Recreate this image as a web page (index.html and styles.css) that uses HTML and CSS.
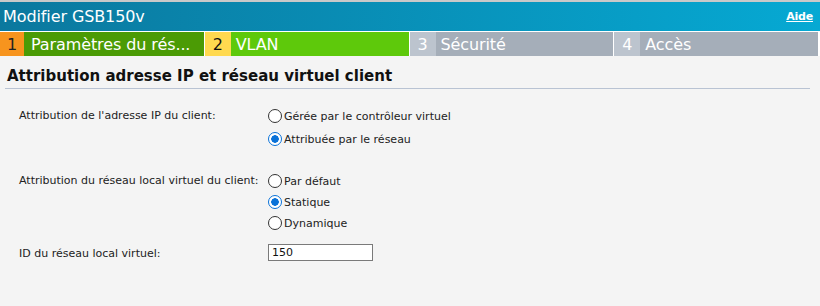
FILE: index.html
```html
<!DOCTYPE html>
<html lang="fr">
<head>
    <meta charset="UTF-8">
    <title>Modifier GSB150v</title>
    <link rel="stylesheet" href="styles.css">
</head>
<body>
    <div class="top-strip"></div>
    <div class="header">
        <span class="title">Modifier GSB150v</span>
        <a class="help" href="#">Aide</a>
    </div>

    <div class="steps">
        <div class="step done">
            <span class="num">1</span>
            <span class="label">Paramètres du rés...</span>
        </div>
        <div class="step current">
            <span class="num">2</span>
            <span class="label">VLAN</span>
        </div>
        <div class="step todo">
            <span class="num">3</span>
            <span class="label">Sécurité</span>
        </div>
        <div class="step todo">
            <span class="num">4</span>
            <span class="label">Accès</span>
        </div>
    </div>

    <div class="content">
        <h2 class="section-title">Attribution adresse IP et réseau virtuel client</h2>

        <div class="form-row">
            <div class="form-label">Attribution de l'adresse IP du client:</div>
            <div class="options">
                <label class="radio"><input type="radio" name="ip"> Gérée par le contrôleur virtuel</label>
                <label class="radio"><input type="radio" name="ip" checked> Attribuée par le réseau</label>
            </div>
        </div>

        <div class="form-row vlan-row">
            <div class="form-label">Attribution du réseau local virtuel du client:</div>
            <div class="options tight">
                <label class="radio"><input type="radio" name="vlan"> Par défaut</label>
                <label class="radio"><input type="radio" name="vlan" checked> Statique</label>
                <label class="radio"><input type="radio" name="vlan"> Dynamique</label>
            </div>
        </div>

        <div class="form-row id-row">
            <div class="form-label">ID du réseau local virtuel:</div>
            <div class="options">
                <input class="text-field" type="text" value="150">
            </div>
        </div>
    </div>
</body>
</html>
```

FILE: styles.css
```css
body {
    margin: 0;
    background-color: #f4f4f4;
    font-family: "DejaVu Sans", Verdana, sans-serif;
    font-size: 11px;
    color: #222;
}
.top-strip {
    height: 2px;
    background-color: #c9c9c9;
}
.header {
    height: 29px;
    display: flex;
    align-items: center;
    justify-content: space-between;
    padding: 0 7px 0 3px;
    background: linear-gradient(to right, #0b789e, #06a9d3);
}
.title {
    color: #fff;
    font-size: 16px;
    letter-spacing: -0.1px;
}
.help {
    color: #fff;
    font-weight: bold;
    font-size: 11px;
    letter-spacing: -0.2px;
}
.steps {
    display: flex;
    gap: 1px;
    width: 818px;
    border-top: 1px solid #fff;
    background-color: #fff;
    padding-right: 2px;
}
.step {
    flex: 1;
    display: flex;
    height: 24px;
    font-size: 16px;
    letter-spacing: -0.1px;
}
.num {
    width: 26px;
    display: flex;
    align-items: center;
    justify-content: center;
}
.label {
    flex: 1;
    display: flex;
    align-items: center;
    padding-left: 5px;
    color: #fff;
}
.step.done .num { background-color: #f7941e; color: #222; width: 24px; }
.step.done .label { background-color: #4b9b05; padding-left: 7px; }
.step.current .num { background-color: #ffd94f; color: #111; }
.step.current .label { background-color: #5ec90b; }
.step.todo .num { background-color: #bcc4ce; color: #fff; }
.step.todo .label { background-color: #a5aeb9; }

.content {
    padding: 11px 10px 0 5px;
}
.section-title {
    margin: 0 0 1px 0;
    padding: 0 0 3px 2px;
    font-size: 15px;
    font-weight: bold;
    color: #111;
    border-bottom: 1px solid #b9c3d3;
}
.form-row {
    display: flex;
    margin-top: 19px;
}
.form-label {
    width: 249px;
    padding-left: 14px;
    padding-top: 1px;
}
.options {
    display: flex;
    flex-direction: column;
    gap: 7px;
}
.options.tight {
    gap: 5px;
}
.vlan-row {
    margin-top: 26px;
}
.id-row {
    margin-top: 13px;
    align-items: center;
}
.radio {
    display: flex;
    align-items: center;
    gap: 2px;
    height: 16px;
}
.radio input {
    appearance: none;
    margin: 0;
    width: 14px;
    height: 14px;
    border: 1px solid #333;
    border-radius: 50%;
    background-color: #fff;
}
.radio input:checked {
    border-color: #0a72d8;
    background: radial-gradient(circle, #0a72d8 0 3.5px, #fff 4px);
}
.text-field {
    width: 105px;
    height: 17px;
    box-sizing: border-box;
    border: 1px solid #7a7a7a;
    padding: 0 3px;
    font-family: "DejaVu Sans", Verdana, sans-serif;
    font-size: 11px;
    color: #111;
    background-color: #fff;
}
```
